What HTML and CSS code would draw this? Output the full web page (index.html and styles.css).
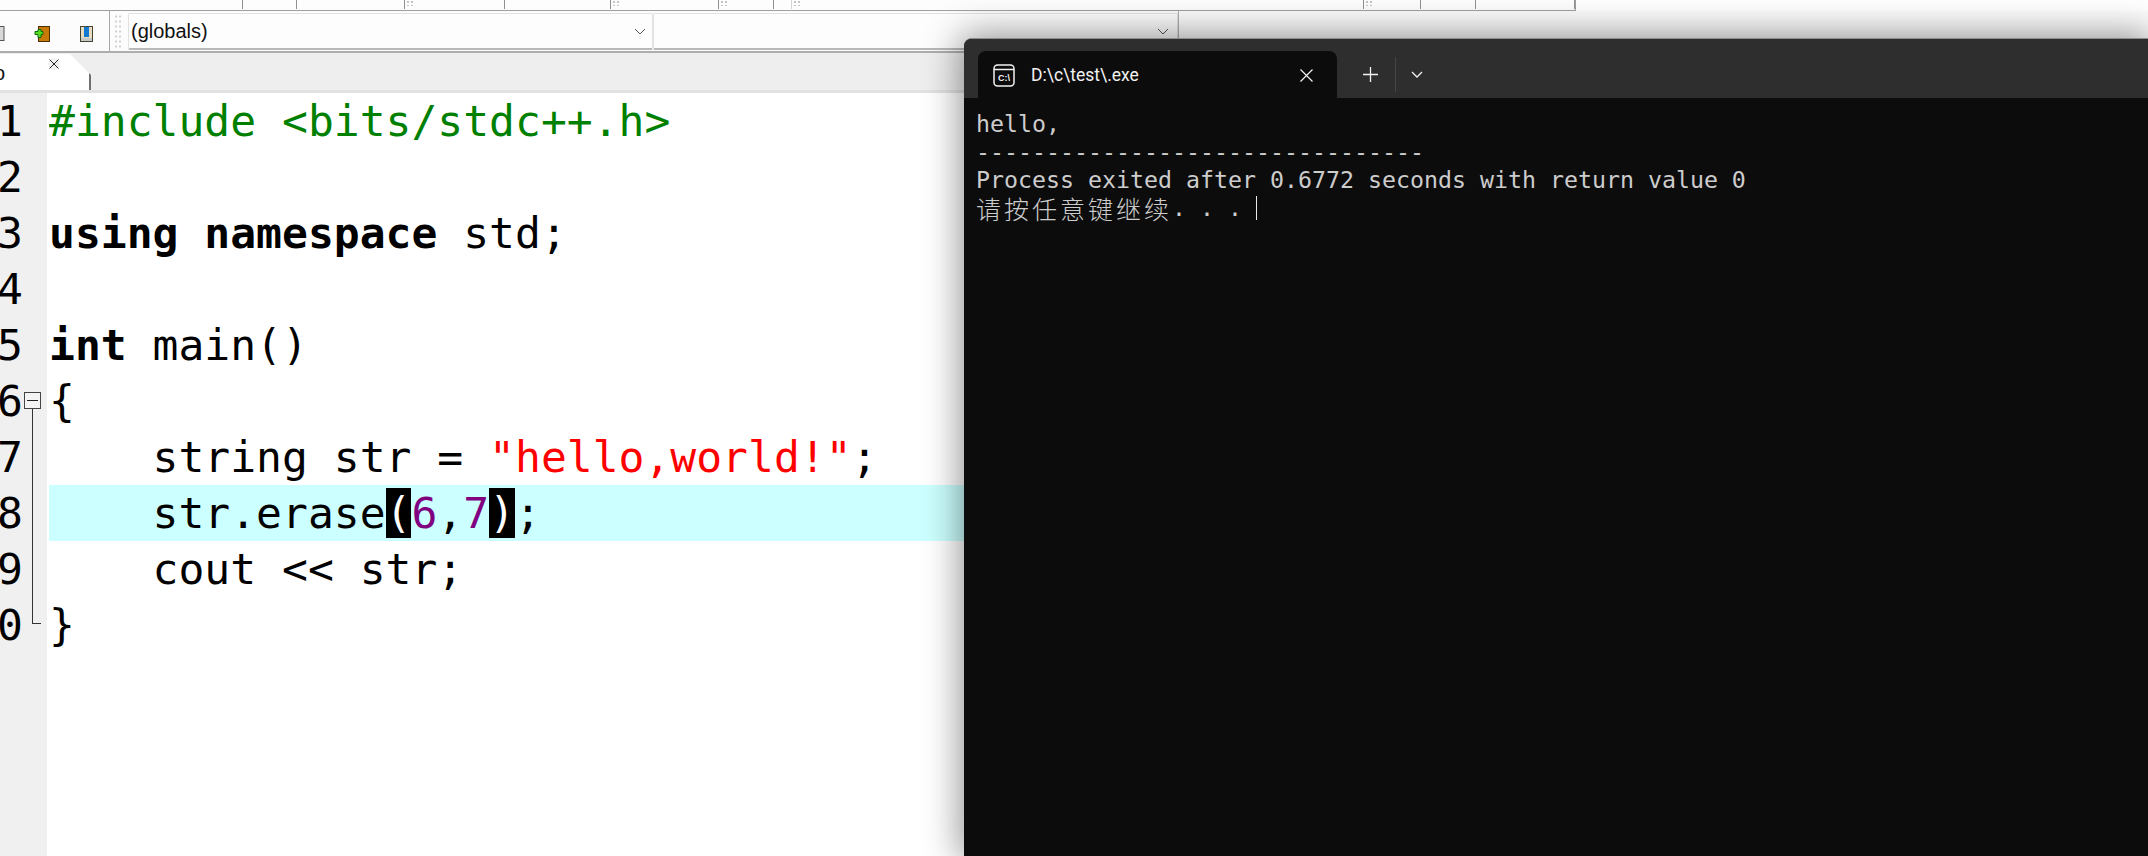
FILE: index.html
```html
<!DOCTYPE html>
<html lang="en">
<head>
<meta charset="utf-8">
<title>Dev-C++</title>
<link rel="stylesheet" href="styles.css">
</head>
<body>
<div class="ide">
  <div class="toolbar-top">
    <div class="cell c243"></div>
    <div class="cell c54"></div>
    <div class="cell grip c108"></div>
    <div class="cell c100"></div>
    <div class="cell grip c106"></div>
    <div class="cell grip c108"></div>
    <div class="cell c55"></div>
    <div class="cell grip light c18"></div>
    <div class="cell c375 noborder"></div>
    <div class="cell grip c197"></div>
    <div class="cell c57"></div>
    <div class="cell c55"></div>
    <div class="cell c99"></div>
  </div>
  <div class="toolbar-main">
    <div class="icons">
      <svg class="icon-partial" width="5" height="15" viewBox="0 0 5 15"><rect x="-4" y="0.5" width="8" height="14" fill="#d8d8d8" stroke="#555"/></svg>
      <svg class="icon-add" width="16" height="16" viewBox="0 0 16 16">
        <rect x="4.5" y="0.5" width="11" height="15" fill="#c87a08" stroke="#4a3000"/>
        <path d="M3 5h3V3h3v2h2v3H9v3H6V8H3Z" transform="translate(-2 0.5)" fill="#58e020" stroke="#0a6a0a"/>
      </svg>
      <svg class="icon-book" width="13" height="16" viewBox="0 0 13 16">
        <rect x="0.5" y="0.5" width="12" height="15" fill="#e8dcc0" stroke="#443"/>
        <rect x="4" y="1" width="5" height="10" fill="#1478d0"/>
        <rect x="1" y="12" width="11" height="3" fill="#c8c8c8"/>
      </svg>
    </div>
    <div class="grip-bar"></div>
    <div class="combo combo-first">
      <span class="combo-text">(globals)</span>
      <svg class="chevron" width="12" height="7" viewBox="0 0 12 7"><path d="M1 1l5 5 5-5" fill="none" stroke="#555" stroke-width="1"/></svg>
    </div>
    <div class="combo combo-second">
      <svg class="chevron" width="12" height="7" viewBox="0 0 12 7"><path d="M1 1l5 5 5-5" fill="none" stroke="#555" stroke-width="1"/></svg>
    </div>
    <div class="toolbar-rest"></div>
  </div>
  <div class="tabbar">
    <div class="tab">
      <span class="tab-label">o</span>
      <span class="tab-close">
        <svg width="10" height="10" viewBox="0 0 10 10"><path d="M.5.5l9 9M9.5.5l-9 9" stroke="#222" fill="none"/></svg>
      </span>
    </div>
  </div>
  <div class="editor">
    <div class="gutter">
      <div class="num">1</div>
      <div class="num">2</div>
      <div class="num">3</div>
      <div class="num">4</div>
      <div class="num">5</div>
      <div class="num">6</div>
      <div class="num">7</div>
      <div class="num">8</div>
      <div class="num">9</div>
      <div class="num">10</div>
      <div class="fold"><span class="fold-minus"></span></div>
      <div class="fold-line"></div>
    </div>
    <div class="code">
      <div class="line"><span class="pre">#include &lt;bits/stdc++.h&gt;</span></div>
      <div class="line"></div>
      <div class="line"><b>using</b> <b>namespace</b> std;</div>
      <div class="line"></div>
      <div class="line"><b>int</b> main()</div>
      <div class="line">{</div>
      <div class="line">    string str = <span class="str">"hello,world!"</span>;</div>
      <div class="line active">    str.erase<span class="match">(</span><span class="num-lit">6</span>,<span class="num-lit">7</span><span class="match">)</span>;</div>
      <div class="line">    cout &lt;&lt; str;</div>
      <div class="line">}</div>
    </div>
  </div>
</div>

<div class="terminal">
  <div class="term-titlebar">
    <div class="term-tab">
      <svg class="term-icon" width="22" height="23" viewBox="0 0 22 23">
        <rect x="1" y="1" width="20" height="21" rx="3.5" fill="none" stroke="#f2f2f2" stroke-width="1.5"/>
        <path d="M1 5.5h20" stroke="#f2f2f2" stroke-width="1.5"/>
        <text x="11" y="17" class="term-icon-text">C:\</text>
      </svg>
      <span class="term-title">D:\c\test\.exe</span>
      <svg class="term-close" width="13" height="13" viewBox="0 0 13 13"><path d="M.5.5l12 12M12.5.5l-12 12" stroke="#f2f2f2" stroke-width="1.2" fill="none"/></svg>
    </div>
    <svg class="term-plus" width="15" height="15" viewBox="0 0 15 15"><path d="M7.5 0v15M0 7.5h15" stroke="#f2f2f2" stroke-width="1.3"/></svg>
    <span class="term-sep"></span>
    <svg class="term-down" width="12" height="7" viewBox="0 0 12 7"><path d="M1 1l5 5 5-5" fill="none" stroke="#f2f2f2" stroke-width="1.3"/></svg>
  </div>
  <div class="term-body">
    <div class="term-line">hello,</div>
    <div class="term-line dashes">--------------------------------</div>
    <div class="term-line">Process exited after 0.6772 seconds with return value 0</div>
    <div class="term-line"><span class="cjk">请按任意键继续</span><span class="dots">. . . </span><span class="cursor"></span></div>
  </div>
</div>
</body>
</html>
```
FILE: styles.css
```css
* { box-sizing: border-box; }
html, body { margin: 0; padding: 0; height: 100%; overflow: hidden; background: #fff; }
body { position: relative; width: 2148px; height: 856px; }

.ide { display: flex; flex-direction: column; height: 856px; }

.toolbar-top {
  display: grid;
  grid-template-columns: 243px 54px 108px 100px 106px 108px 55px 18px 375px 197px 57px 55px 99px;
  width: 1576px;
  height: 11px;
  border-bottom: 1px solid #a0a0a0;
  border-right: 1px solid #a0a0a0;
  background: #fdfdfd;
  flex: none;
}
.cell { border-right: 1px solid #909090; height: 9px; position: relative; }
.cell.noborder { border-right: 0; }
.cell.light { border-right-color: #d4d4d4; }
.cell.grip::after {
  content: "";
  position: absolute;
  right: -9px;
  top: 0;
  width: 7px;
  height: 6px;
  background: radial-gradient(circle, #c4c4c4 1px, transparent 1.2px) 0 0 / 4px 4px;
}

.toolbar-main {
  display: flex;
  align-items: stretch;
  height: 42px;
  flex: none;
  border-bottom: 2px solid #adadad;
  background: #fcfcfc;
}
.icons { position: relative; width: 110px; border-right: 1px solid #a8a8a8; flex: none; }
.icon-partial, .icon-add, .icon-book { position: absolute; top: 15px; }
.icon-partial { left: 0; }
.icon-add { left: 34px; }
.icon-book { left: 80px; }
.grip-bar {
  width: 18px;
  flex: none;
  margin: 3px 0;
  background: radial-gradient(circle, #cfcfcf 1px, transparent 1.2px) 4px 0 / 4px 5px repeat-y,
              radial-gradient(circle, #cfcfcf 1px, transparent 1.2px) 8px 0 / 4px 5px repeat-y;
}
.combo {
  display: flex;
  align-items: center;
  justify-content: space-between;
  margin-top: 2px;
  height: 37px;
  border: 1px solid #e2e2e2;
  border-bottom: 2px solid #b8b8b8;
  border-radius: 2px;
  background: #fdfdfd;
  flex: none;
}
.combo-first { width: 525px; padding: 0 6px 0 2px; }
.combo-second { width: 525px; justify-content: flex-end; padding-right: 8px; }
.combo-text { font: 20px/1 "Liberation Sans", Arial, sans-serif; color: #111; }
.toolbar-rest { flex: 1; border-left: 1px solid #b0b0b0; margin-left: 0; }

.tabbar {
  height: 40px;
  flex: none;
  background: #eeeeee;
  border-bottom: 3px solid #e2e2e2;
  position: relative;
}
.tab {
  position: relative;
  width: 91px;
  height: 36px;
  margin-top: 1px;
  background: #fff;
  clip-path: polygon(0 0, 70px 0, 91px 21px, 91px 100%, 0 100%);
  border-right: 2px solid #707070;
  font: 20px/1 "Liberation Sans", Arial, sans-serif;
}
.tab-label { position: absolute; left: -6px; top: 9px; color: #111; }
.tab-close {
  position: absolute;
  left: 48px;
  top: 4px;
  width: 12px;
  height: 12px;
  display: flex;
  align-items: center;
  justify-content: center;
  background: #f2f2f2;
  border-radius: 50%;
}

.editor { display: flex; flex: 1; min-height: 0; font: 43px/56px "DejaVu Sans Mono", monospace; color: #000; }
.gutter { position: relative; width: 49px; flex: none; background: linear-gradient(to right, #f0f0f0 47px, #fff 47px); }
.num { display: flex; justify-content: flex-end; height: 56px; padding-right: 26px; }
.fold {
  position: absolute;
  left: 24px;
  top: 299px;
  width: 17px;
  height: 17px;
  border: 1px solid #444;
  background: #f4f4f4;
  display: flex;
  align-items: center;
  justify-content: center;
}
.fold-minus { width: 11px; height: 1px; background: #222; }
.fold-line {
  position: absolute;
  left: 32px;
  top: 316px;
  width: 9px;
  height: 215px;
  border-left: 1px solid #333;
  border-bottom: 1px solid #333;
}
.code { flex: 1; min-width: 0; }
.line { height: 56px; white-space: pre; }
.pre { color: #008000; }
.str { color: #ff0000; }
.num-lit { color: #800080; }
.active { background: #ccffff; }
.match { background: #000; color: #fff; }

.terminal {
  position: absolute;
  left: 964px;
  top: 38px;
  right: 0;
  bottom: 0;
  display: flex;
  flex-direction: column;
  background: #0c0c0c;
  border-radius: 8px 0 0 0;
  border-top: 1px solid #8c8c8c;
  box-shadow: 0 0 36px 4px rgba(0, 0, 0, 0.42);
}
.term-titlebar {
  display: flex;
  align-items: center;
  height: 59px;
  flex: none;
  padding: 12px 0 0 14px;
  background: #2e2e2e;
  border-radius: 7px 0 0 0;
}
.term-tab {
  display: flex;
  align-items: center;
  align-self: flex-end;
  width: 359px;
  height: 47px;
  padding: 2px 24px 0 15px;
  background: #0c0c0c;
  border-radius: 8px 8px 0 0;
}
.term-icon { flex: none; }
.term-icon-text { font: 700 9px "Liberation Sans", Arial, sans-serif; fill: #f2f2f2; text-anchor: middle; }
.term-title { font: 17.5px/1 Roboto, "Liberation Sans", sans-serif; color: #f2f2f2; margin-left: 16px; flex: 1; }
.term-close { flex: none; }
.term-plus { margin-left: 26px; flex: none; }
.term-sep { width: 1px; height: 35px; background: #454545; margin-left: 17px; flex: none; }
.term-down { margin-left: 15px; flex: none; }
.term-body { padding: 12px 0 0 12px; font: 23.25px/28px "DejaVu Sans Mono", monospace; color: #cccccc; }
.term-line { height: 28px; white-space: pre; display: flex; align-items: center; }
.cjk { font: 300 25px/28px "Noto Sans CJK SC", sans-serif; letter-spacing: 3px; }
.dots { white-space: pre; letter-spacing: 0; }
.cursor { width: 1px; height: 24px; background: #e8e8e8; }
```
